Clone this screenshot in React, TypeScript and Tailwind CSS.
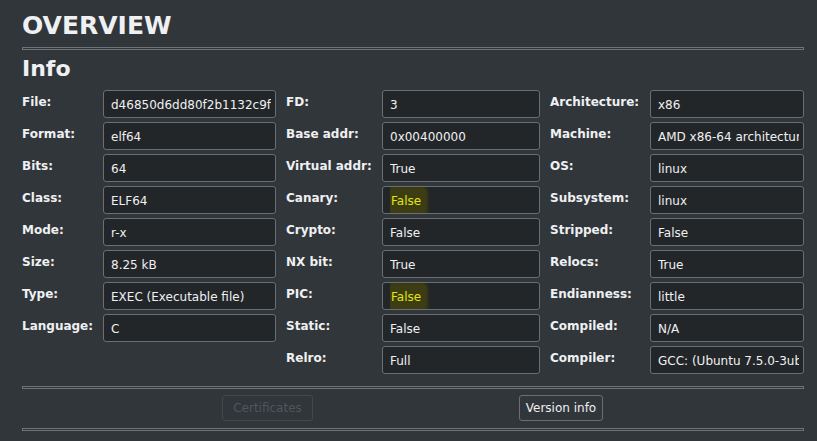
const col1: [string, string, boolean?][] = [
  ["File:", "d46850d6dd80f2b1132c9f"],
  ["Format:", "elf64"],
  ["Bits:", "64"],
  ["Class:", "ELF64"],
  ["Mode:", "r-x"],
  ["Size:", "8.25 kB"],
  ["Type:", "EXEC (Executable file)"],
  ["Language:", "C"],
];

const col2: [string, string, boolean?][] = [
  ["FD:", "3"],
  ["Base addr:", "0x00400000"],
  ["Virtual addr:", "True"],
  ["Canary:", "False", true],
  ["Crypto:", "False"],
  ["NX bit:", "True"],
  ["PIC:", "False", true],
  ["Static:", "False"],
  ["Relro:", "Full"],
];

const col3: [string, string, boolean?][] = [
  ["Architecture:", "x86"],
  ["Machine:", "AMD x86-64 architecture"],
  ["OS:", "linux"],
  ["Subsystem:", "linux"],
  ["Stripped:", "False"],
  ["Relocs:", "True"],
  ["Endianness:", "little"],
  ["Compiled:", "N/A"],
  ["Compiler:", "GCC: (Ubuntu 7.5.0-3ubuntu1~18.04) 7.5.0"],
];

function Sep() {
  return <div className="h-[3px] w-full border border-[#6f7377]" />;
}

function Column({ rows, labelW, inputW }: { rows: [string, string, boolean?][]; labelW: string; inputW: string }) {
  return (
    <div className="flex flex-col gap-1">
      {rows.map(([label, value, warn]) => (
        <div key={label} className="flex h-[28px]">
          <div className={`${labelW} flex items-center pb-1 text-[12px] font-bold text-[#eff0f1]`}>{label}</div>
          <div className={`${inputW} flex items-center rounded-[3px] border border-[#6b6f73] bg-[#232629] pl-[7px] pr-[4px] text-[12px] text-[#eff0f1]`}>
            <div className="flex h-full w-full items-center overflow-hidden whitespace-nowrap">
              {warn ? (
                <span className="-ml-[0px] mt-[2px] rounded-sm bg-[#3c3d12] py-[3px] pl-[1px] pr-[4px] text-[#e4e414] shadow-[0_0_3px_3px_#3c3d12]">
                  {value}
                </span>
              ) : (
                <span className="mt-[2px]">{value}</span>
              )}
            </div>
          </div>
        </div>
      ))}
    </div>
  );
}

export default function App() {
  return (
    <div className="h-[441px] w-[817px] overflow-hidden bg-[#31363b] pl-[22px] pr-[13px] pt-[11px]" style={{ fontFamily: "'DejaVu Sans', sans-serif" }}>
      <div className="text-[25px] font-bold leading-[30px] text-[#eff0f1]">OVERVIEW</div>
      <div className="mt-[6px]">
        <Sep />
      </div>
      <div className="mt-[6px] text-[22px] font-bold leading-[26px] text-[#eff0f1]">Info</div>
      <div className="mt-[8px] flex gap-[10px]">
        <Column rows={col1} labelW="w-[81px]" inputW="w-[173px]" />
        <Column rows={col2} labelW="w-[96px]" inputW="w-[158px]" />
        <Column rows={col3} labelW="w-[100px]" inputW="w-[154px]" />
      </div>
      <div className="mt-[12px]">
        <Sep />
      </div>
      <div className="mt-[6px] flex h-[26px] pl-[200px]">
        <button disabled className="w-[91px] rounded-[3px] border border-[#43484c] text-[12px] text-[#50555a]">
          Certificates
        </button>
        <button className="ml-[206px] w-[84px] rounded-[3px] border border-[#6b6f73] text-[12px] text-[#eff0f1]">
          Version info
        </button>
      </div>
      <div className="mt-[7px]">
        <Sep />
      </div>
    </div>
  );
}
